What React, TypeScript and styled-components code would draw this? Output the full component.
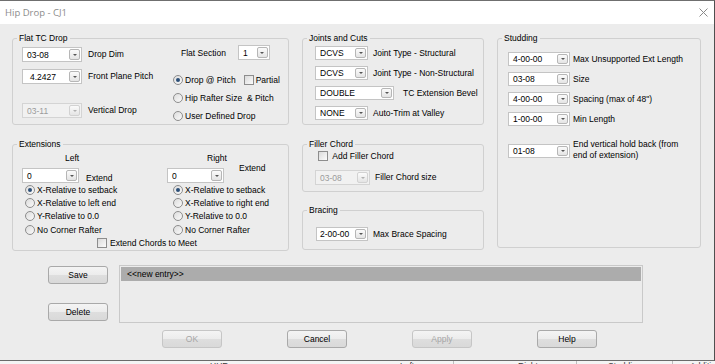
import React from 'react';
import styled, { createGlobalStyle } from 'styled-components';

const GlobalStyle = createGlobalStyle`
    html, body {
        margin: 0;
        padding: 0;
        background: #f2f2f2;
    }
    body {
        font-family: 'Liberation Sans', Arial, sans-serif;
        font-size: 8.5px;
        color: #000;
    }
    * {
        box-sizing: border-box;
    }
`;

const Screen = styled.div`
    width: 715px;
    height: 364px;
    overflow: hidden;
    display: flex;
    flex-direction: column;
    background: #f2f2f2;
`;

const Window = styled.div`
    width: 715px;
    height: 361px;
    flex-shrink: 0;
    display: flex;
    flex-direction: column;
    background: #ececec;
    border-top: 1px solid #6f6f6f;
    border-right: 1px solid #4f4f4f;
    border-bottom: 1px solid #6a6a6a;
`;

const TitleBar = styled.div`
    height: 23px;
    flex-shrink: 0;
    background: #fff;
    display: flex;
    align-items: center;
    justify-content: space-between;
    padding: 0 6px 0 5px;
`;

const TitleText = styled.span`
    font-family: 'Open Sans', 'Noto Sans', sans-serif;
    font-size: 9.5px;
    color: #8c8c8c;
`;

const Body = styled.div`
    flex: 1;
    display: flex;
    flex-direction: column;
    padding: 14px 13px 0 12px;
`;

const TopRow = styled.div`
    display: flex;
    gap: 13px;
    height: 213px;
    align-items: flex-start;
`;

const Column = styled.div<{ $w: number; $gap: number }>`
    width: ${(p) => p.$w}px;
    display: flex;
    flex-direction: column;
    gap: ${(p) => p.$gap}px;
`;

const Group = styled.div<{ $h: number; $mt?: number }>`
    position: relative;
    height: ${(p) => p.$h}px;
    margin-top: ${(p) => p.$mt ?? 0}px;
    border: 1px solid #d0d0d0;
    border-radius: 3px;
`;

const Caption = styled.span`
    position: absolute;
    top: -6px;
    left: 4px;
    padding: 0 2px;
    line-height: 11px;
    background: #ececec;
`;

const Label = styled.span<{ $gap?: number; $mt?: number }>`
    margin-left: ${(p) => p.$gap ?? 5}px;
    margin-top: ${(p) => p.$mt ?? 0}px;
    line-height: 10.5px;
    white-space: nowrap;
`;

// combo box with the little drop button on its right
const ComboBox = styled.div<{ $w: number; $h: number; $off?: boolean; $pad?: number }>`
    width: ${(p) => p.$w}px;
    height: ${(p) => p.$h}px;
    flex-shrink: 0;
    display: flex;
    align-items: center;
    padding-left: ${(p) => p.$pad ?? 4}px;
    background: ${(p) => (p.$off ? '#f1f1f1' : '#fff')};
    border: 1px solid ${(p) => (p.$off ? '#d4d4d4' : '#c4c4c4')};
    color: ${(p) => (p.$off ? '#9b9b9b' : '#000')};
`;

const ComboText = styled.span`
    flex: 1;
    line-height: 10px;
`;

const DropButton = styled.span<{ $off?: boolean }>`
    width: 11px;
    height: calc(100% - 2px);
    margin-right: 1px;
    display: flex;
    align-items: center;
    justify-content: center;
    border: 1px solid ${(p) => (p.$off ? '#d2d2d2' : '#b6b6b6')};
    border-radius: 2px;
    background: linear-gradient(#fbfbfb, #e4e4e4);
`;

const Arrow = styled.span<{ $off?: boolean }>`
    width: 0;
    height: 0;
    border-left: 2px solid transparent;
    border-right: 2px solid transparent;
    border-top: 2px solid ${(p) => (p.$off ? '#b0b0b0' : '#555')};
`;

const Combo = ({ value, w, h = 15, off, pad }: { value: string; w: number; h?: number; off?: boolean; pad?: number }) => (
    <ComboBox $w={w} $h={h} $off={off} $pad={pad}>
        <ComboText>{value}</ComboText>
        <DropButton $off={off}>
            <Arrow $off={off} />
        </DropButton>
    </ComboBox>
);

const Radio = styled.span<{ $on?: boolean }>`
    width: 10px;
    height: 10px;
    flex-shrink: 0;
    border-radius: 50%;
    border: 1px solid #8d8d8d;
    background: linear-gradient(135deg, #dcdcdc, #fafafa);
    display: flex;
    align-items: center;
    justify-content: center;
    &::after {
        content: '';
        width: 4px;
        height: 4px;
        border-radius: 50%;
        background: ${(p) => (p.$on ? '#2b4f78' : 'transparent')};
    }
`;

const Check = styled.span<{ $ml?: number }>`
    width: 10px;
    height: 10px;
    flex-shrink: 0;
    margin-left: ${(p) => p.$ml ?? 0}px;
    border: 1px solid #8d8d8d;
    background: linear-gradient(135deg, #dadada, #fbfbfb);
`;

const FieldRow = styled.div<{ $h?: number; $mt?: number; $align?: string }>`
    height: ${(p) => p.$h ?? 15}px;
    margin-top: ${(p) => p.$mt ?? 0}px;
    display: flex;
    align-items: ${(p) => p.$align ?? 'center'};
`;

const OptionRow = styled.div<{ $h?: number; $ml?: number }>`
    height: ${(p) => p.$h ?? 13}px;
    margin-left: ${(p) => p.$ml ?? 0}px;
    display: flex;
    align-items: center;
    gap: 2px;
    white-space: nowrap;
`;

/* Flat TC Drop */
const FlatBody = styled.div`
    display: flex;
    padding: 8px 0 0 9px;
`;

const FieldStack = styled.div<{ $w?: number; $gap: number }>`
    width: ${(p) => (p.$w ? `${p.$w}px` : 'auto')};
    display: flex;
    flex-direction: column;
    gap: ${(p) => p.$gap}px;
`;

const OptionStack = styled.div`
    display: flex;
    flex-direction: column;
    gap: 5px;
`;

const FlatSectionRow = styled.div`
    height: 15px;
    margin: -2px 0 8px 9px;
    display: flex;
    align-items: center;
    gap: 12px;
`;

/* Extensions */
const ExtBody = styled.div`
    display: grid;
    grid-template-columns: 145px 1fr;
    padding: 8px 0 0 9px;
`;

const SideTitle = styled.div<{ $x: number }>`
    padding-left: ${(p) => p.$x}px;
    line-height: 11px;
    height: 11px;
    margin-bottom: 4px;
`;

const RadioList = styled.div<{ $ml: number }>`
    display: flex;
    flex-direction: column;
    margin-left: ${(p) => p.$ml}px;
`;

const MeetRow = styled.div`
    grid-column: 1 / -1;
    height: 12px;
    margin-top: 1px;
    padding-left: 75px;
    display: flex;
    align-items: center;
    gap: 3px;
`;

/* middle & right groups */
const GroupBody = styled.div<{ $pt: number; $pl: number }>`
    padding: ${(p) => p.$pt}px 0 0 ${(p) => p.$pl}px;
    display: flex;
    flex-direction: column;
`;

/* bottom */
const BottomArea = styled.div`
    display: grid;
    grid-template-columns: 59px 524px;
    column-gap: 12px;
    margin-top: 14px;
    padding-left: 36px;
`;

const SideButtons = styled.div`
    display: flex;
    flex-direction: column;
    gap: 19px;
    padding-top: 1px;
`;

const Button = styled.button<{ $off?: boolean }>`
    width: 60px;
    height: 18px;
    padding: 0;
    font-family: 'Liberation Sans', Arial, sans-serif;
    font-size: 8.5px;
    color: ${(p) => (p.$off ? '#a6a6a6' : '#000')};
    border: 1px solid ${(p) => (p.$off ? '#c6c6c6' : '#a9a9a9')};
    border-radius: 3px;
    background: linear-gradient(#f4f4f4 0%, #ececec 50%, #dedede 51%, #d9d9d9 100%);
`;

const ListBox = styled.div`
    height: 58px;
    border: 1px solid #c9c9c9;
    padding: 1px;
    background: #ececec;
`;

const ListItem = styled.div<{ $sel?: boolean }>`
    height: 14px;
    line-height: 14px;
    padding-left: 6px;
    background: ${(p) => (p.$sel ? '#acacac' : 'transparent')};
`;

const Footer = styled.div`
    display: flex;
    gap: 65px;
    margin-top: 7px;
    padding-left: 150px;
`;

/* the grid header of the window behind the dialog, only its top shows */
const BackStrip = styled.div`
    flex: 1;
    display: flex;
    overflow: hidden;
    background: #f4f4f4;
    color: #333;
`;

const BackCell = styled.div<{ $w: number; $line?: boolean }>`
    width: ${(p) => p.$w}px;
    flex-shrink: 0;
    line-height: 12px;
    margin-top: -1px;
    border-right: ${(p) => (p.$line ? '1px solid #bdbdbd' : 'none')};
`;

const Close = () => (
    <svg width="9" height="9" viewBox="0 0 9 9">
        <path d="M0.5 0.5 L8.5 8.5 M8.5 0.5 L0.5 8.5" stroke="#8a8a8a" strokeWidth="1" fill="none" />
    </svg>
);

const App = () => {
    return (
        <>
            <GlobalStyle />
            <Screen>
                <Window>
                    <TitleBar>
                        <TitleText>Hip Drop - CJ1</TitleText>
                        <Close />
                    </TitleBar>
                    <Body>
                        <TopRow>
                            <Column $w={277} $gap={19}>
                                <Group $h={87}>
                                    <Caption>Flat TC Drop</Caption>
                                    <FlatBody>
                                        <FieldStack $w={150} $gap={7}>
                                            <FieldRow>
                                                <Combo value="03-08" w={60} />
                                                <Label $gap={6}>Drop Dim</Label>
                                            </FieldRow>
                                            <FieldRow>
                                                <Combo value="4.2427" w={60} pad={7} />
                                                <Label $gap={6}>Front Plane Pitch</Label>
                                            </FieldRow>
                                            <FieldRow $mt={12}>
                                                <Combo value="03-11" w={60} off />
                                                <Label $gap={6}>Vertical Drop</Label>
                                            </FieldRow>
                                        </FieldStack>
                                        <OptionStack>
                                            <FlatSectionRow>
                                                <span>Flat Section</span>
                                                <Combo value="1" w={32} />
                                            </FlatSectionRow>
                                            <OptionRow $ml={1}>
                                                <Radio $on />
                                                <span>Drop @ Pitch</span>
                                                <Check $ml={6} />
                                                <span>Partial</span>
                                            </OptionRow>
                                            <OptionRow $ml={1}>
                                                <Radio />
                                                <span>Hip Rafter Size &nbsp;&amp; Pitch</span>
                                            </OptionRow>
                                            <OptionRow $ml={1}>
                                                <Radio />
                                                <span>User Defined Drop</span>
                                            </OptionRow>
                                        </OptionStack>
                                    </FlatBody>
                                </Group>
                                <Group $h={107}>
                                    <Caption>Extensions</Caption>
                                    <ExtBody>
                                        <div>
                                            <SideTitle $x={43}>Left</SideTitle>
                                            <FieldRow $align="flex-end">
                                                <Combo value="0" w={57} />
                                                <Label $gap={7}>Extend</Label>
                                            </FieldRow>
                                            <RadioList $ml={3}>
                                                <OptionRow $h={13.3}>
                                                    <Radio $on />
                                                    <span>X-Relative to setback</span>
                                                </OptionRow>
                                                <OptionRow $h={13.3}>
                                                    <Radio />
                                                    <span>X-Relative to left end</span>
                                                </OptionRow>
                                                <OptionRow $h={13.3}>
                                                    <Radio />
                                                    <span>Y-Relative to 0.0</span>
                                                </OptionRow>
                                                <OptionRow $h={13.3}>
                                                    <Radio />
                                                    <span>No Corner Rafter</span>
                                                </OptionRow>
                                            </RadioList>
                                        </div>
                                        <div>
                                            <SideTitle $x={40}>Right</SideTitle>
                                            <FieldRow $align="flex-start">
                                                <Combo value="0" w={57} />
                                                <Label $gap={15} $mt={-5}>Extend</Label>
                                            </FieldRow>
                                            <RadioList $ml={6}>
                                                <OptionRow $h={13.3}>
                                                    <Radio $on />
                                                    <span>X-Relative to setback</span>
                                                </OptionRow>
                                                <OptionRow $h={13.3}>
                                                    <Radio />
                                                    <span>X-Relative to right end</span>
                                                </OptionRow>
                                                <OptionRow $h={13.3}>
                                                    <Radio />
                                                    <span>Y-Relative to 0.0</span>
                                                </OptionRow>
                                                <OptionRow $h={13.3}>
                                                    <Radio />
                                                    <span>No Corner Rafter</span>
                                                </OptionRow>
                                            </RadioList>
                                        </div>
                                        <MeetRow>
                                            <Check />
                                            <span>Extend Chords to Meet</span>
                                        </MeetRow>
                                    </ExtBody>
                                </Group>
                            </Column>

                            <Column $w={182} $gap={0}>
                                <Group $h={87}>
                                    <Caption>Joints and Cuts</Caption>
                                    <GroupBody $pt={7} $pl={12}>
                                        <FieldStack $gap={6}>
                                            <FieldRow $h={14}>
                                                <Combo value="DCVS" w={53} h={14} />
                                                <Label>Joint Type - Structural</Label>
                                            </FieldRow>
                                            <FieldRow $h={14}>
                                                <Combo value="DCVS" w={53} h={14} />
                                                <Label>Joint Type - Non-Structural</Label>
                                            </FieldRow>
                                            <FieldRow $h={14}>
                                                <Combo value="DOUBLE" w={79} h={14} />
                                                <Label $gap={9}>TC Extension Bevel</Label>
                                            </FieldRow>
                                            <FieldRow $h={14}>
                                                <Combo value="NONE" w={53} h={14} />
                                                <Label>Auto-Trim at Valley</Label>
                                            </FieldRow>
                                        </FieldStack>
                                    </GroupBody>
                                </Group>
                                <Group $h={48} $mt={19}>
                                    <Caption>Filler Chord</Caption>
                                    <GroupBody $pt={6} $pl={12}>
                                        <OptionRow $h={10} $ml={3}>
                                            <Check />
                                            <span>&nbsp;Add Filler Chord</span>
                                        </OptionRow>
                                        <FieldRow $mt={9}>
                                            <Combo value="03-08" w={55} off />
                                            <Label>Filler Chord size</Label>
                                        </FieldRow>
                                    </GroupBody>
                                </Group>
                                <Group $h={40} $mt={18}>
                                    <Caption>Bracing</Caption>
                                    <GroupBody $pt={16} $pl={13}>
                                        <FieldRow $h={14}>
                                            <Combo value="2-00-00" w={52} h={14} pad={3} />
                                            <Label>Max Brace Spacing</Label>
                                        </FieldRow>
                                    </GroupBody>
                                </Group>
                            </Column>

                            <Column $w={204} $gap={0}>
                                <Group $h={210}>
                                    <Caption>Studding</Caption>
                                    <GroupBody $pt={13} $pl={10}>
                                        <FieldStack $gap={6}>
                                            <FieldRow $h={14}>
                                                <Combo value="4-00-00" w={62} h={14} />
                                                <Label $gap={3}>Max Unsupported Ext Length</Label>
                                            </FieldRow>
                                            <FieldRow $h={14}>
                                                <Combo value="03-08" w={62} h={14} />
                                                <Label $gap={3}>Size</Label>
                                            </FieldRow>
                                            <FieldRow $h={14}>
                                                <Combo value="4-00-00" w={62} h={14} />
                                                <Label $gap={3}>Spacing (max of 48")</Label>
                                            </FieldRow>
                                            <FieldRow $h={14}>
                                                <Combo value="1-00-00" w={62} h={14} />
                                                <Label $gap={3}>Min Length</Label>
                                            </FieldRow>
                                        </FieldStack>
                                        <FieldRow $h={14} $mt={18} $align="flex-start">
                                            <Combo value="01-08" w={62} h={14} />
                                            <Label $gap={3} $mt={-5}>
                                                End vertical hold back (from
                                                <br />
                                                end of extension)
                                            </Label>
                                        </FieldRow>
                                    </GroupBody>
                                </Group>
                            </Column>
                        </TopRow>

                        <BottomArea>
                            <SideButtons>
                                <Button>Save</Button>
                                <Button>Delete</Button>
                            </SideButtons>
                            <ListBox>
                                <ListItem $sel>&lt;&lt;new entry&gt;&gt;</ListItem>
                            </ListBox>
                        </BottomArea>

                        <Footer>
                            <Button $off>OK</Button>
                            <Button>Cancel</Button>
                            <Button $off>Apply</Button>
                            <Button>Help</Button>
                        </Footer>
                    </Body>
                </Window>
                <BackStrip>
                    <BackCell $w={210} />
                    <BackCell $w={190}>HHR</BackCell>
                    <BackCell $w={54} $line>Left</BackCell>
                    <BackCell $w={64} />
                    <BackCell $w={59} $line>Right</BackCell>
                    <BackCell $w={31} />
                    <BackCell $w={65} $line>Studding</BackCell>
                    <BackCell $w={17} />
                    <BackCell $w={30}>Additi</BackCell>
                </BackStrip>
            </Screen>
        </>
    );
};

export default App;
